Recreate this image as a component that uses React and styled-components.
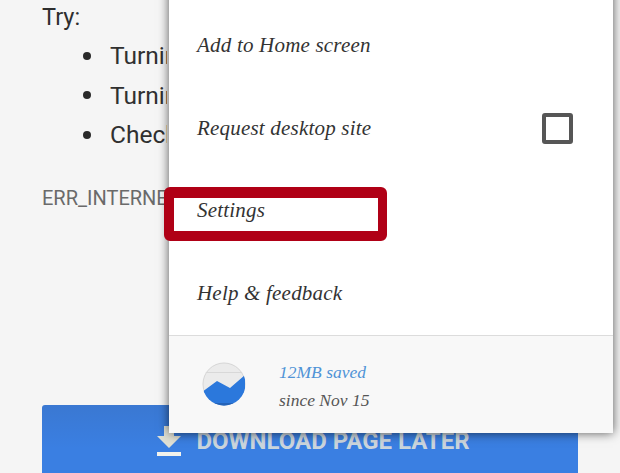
import React from "react";
import styled, { createGlobalStyle } from "styled-components";

const GlobalStyle = createGlobalStyle`
  html, body {
    margin: 0;
    padding: 0;
    background: #f5f5f5;
    overflow: hidden;
  }
`;

const Page = styled.div`
  position: relative;
  width: 620px;
  height: 473px;
  overflow: hidden;
  background: #f5f5f5;
  font-family: Roboto, "Liberation Sans", sans-serif;
`;

const ErrorContent = styled.div`
  display: flex;
  flex-direction: column;
  padding: 3px 42px 0;
`;

const TryLabel = styled.div`
  font-size: 23.5px;
  line-height: 28px;
  color: #2e2e2e;
`;

const Suggestions = styled.ul`
  margin: 5px 0 0;
  padding: 0 0 0 41px;
  list-style: none;
  font-size: 24.5px;
  line-height: 39.5px;
  color: #303030;
`;

const Suggestion = styled.li`
  display: flex;
  align-items: center;
  gap: 19px;

  &::before {
    content: "";
    width: 8px;
    height: 8px;
    border-radius: 50%;
    background: #2a2a2a;
  }
`;

const SuggestionText = styled.span`
  width: 57px;
  overflow: hidden;
  white-space: nowrap;
`;

const ErrorCode = styled.div`
  width: 127px;
  overflow: hidden;
  margin-top: 30px;
  font-size: 20px;
  line-height: 26px;
  color: #6a6a6a;
  white-space: nowrap;
`;

const DownloadButton = styled.div`
  display: flex;
  align-items: center;
  justify-content: center;
  gap: 15px;
  height: 72px;
  margin-top: 194px;
  padding-left: 7px;
  box-sizing: border-box;
  border-radius: 3px 3px 0 0;
  background: linear-gradient(#3a78d2, #3a7fe2 60%);
  color: #cbd5dc;
  font-size: 24px;
  font-weight: 700;
`;

const Menu = styled.div`
  position: absolute;
  left: 169px;
  top: -40px;
  width: 444px;
  height: 473px;
  display: flex;
  flex-direction: column;
  background: #fff;
  box-shadow: 0 0 10px rgba(0, 0, 0, 0.65);
  font-family: "Liberation Serif", serif;
  font-style: italic;
`;

const MenuList = styled.div`
  display: flex;
  flex-direction: column;
  height: 375px;
  padding-top: 44px;
  box-sizing: border-box;
`;

const MenuItem = styled.div`
  display: flex;
  align-items: center;
  justify-content: space-between;
  height: 83px;
  padding: 0 40px 0 28px;
  font-size: 21px;
  letter-spacing: 0.2px;
  color: #333;
`;

const CheckBox = styled.div`
  width: 31px;
  height: 31px;
  box-sizing: border-box;
  border: 4px solid #565656;
  border-radius: 3px;
`;

const SavingsFooter = styled.div`
  display: flex;
  align-items: center;
  gap: 33px;
  flex: 1;
  padding: 0 0 2px 33px;
  background: #f8f8f8;
  border-top: 1px solid #dcdcdc;
`;

const SavingsText = styled.div`
  display: flex;
  flex-direction: column;
  gap: 7px;
  margin-top: 5px;
  font-size: 17.5px;
  line-height: 21px;
`;

const SavedAmount = styled.div`
  color: #4f93d6;
`;

const SavedSince = styled.div`
  color: #555;
`;

const Highlight = styled.div`
  position: absolute;
  left: 164px;
  top: 187px;
  width: 223px;
  height: 54px;
  box-sizing: border-box;
  border: solid #b00016;
  border-width: 11px 9px 10px 10px;
  border-radius: 6px;
`;

const DownloadIcon = () => (
  <svg width="24" height="30" viewBox="0 0 24 30" fill="#e0e0d4">
    <path d="M7 0h10v10h7L12 22 0 10h7z" />
    <rect x="0" y="26" width="24" height="4" fill="#f2f2ec" />
  </svg>
);

const SavingsChart = () => (
  <svg width="44" height="44" viewBox="0 0 44 44">
    <defs>
      <clipPath id="disc">
        <circle cx="22" cy="22" r="21.5" />
      </clipPath>
    </defs>
    <circle cx="22" cy="22" r="21" fill="#ebebeb" stroke="#d6d6d6" />
    <g clipPath="url(#disc)">
      <rect x="0" y="10" width="44" height="1" fill="#d8d8d8" />
      <path d="M0 30 L15 19 L28 26 L43 13 V44 H0 Z" fill="#2b78dc" />
      <path d="M0 44 H44 V41 H0 Z" fill="#2463b8" />
    </g>
  </svg>
);

export default function App() {
  return (
    <Page>
      <GlobalStyle />
      <ErrorContent>
        <TryLabel>Try:</TryLabel>
        <Suggestions>
          <Suggestion>
            <SuggestionText>Turning off airplane mode</SuggestionText>
          </Suggestion>
          <Suggestion>
            <SuggestionText>Turning on mobile data or Wi-Fi</SuggestionText>
          </Suggestion>
          <Suggestion>
            <SuggestionText>Checking the signal in your area</SuggestionText>
          </Suggestion>
        </Suggestions>
        <ErrorCode>ERR_INTERNET_DISCONNECTED</ErrorCode>
        <DownloadButton>
          <DownloadIcon />
          DOWNLOAD PAGE LATER
        </DownloadButton>
      </ErrorContent>
      <Menu>
        <MenuList>
          <MenuItem>Add to Home screen</MenuItem>
          <MenuItem>
            Request desktop site
            <CheckBox />
          </MenuItem>
          <MenuItem>Settings</MenuItem>
          <MenuItem>Help &amp; feedback</MenuItem>
        </MenuList>
        <SavingsFooter>
          <SavingsChart />
          <SavingsText>
            <SavedAmount>12MB saved</SavedAmount>
            <SavedSince>since Nov 15</SavedSince>
          </SavingsText>
        </SavingsFooter>
      </Menu>
      <Highlight />
    </Page>
  );
}
